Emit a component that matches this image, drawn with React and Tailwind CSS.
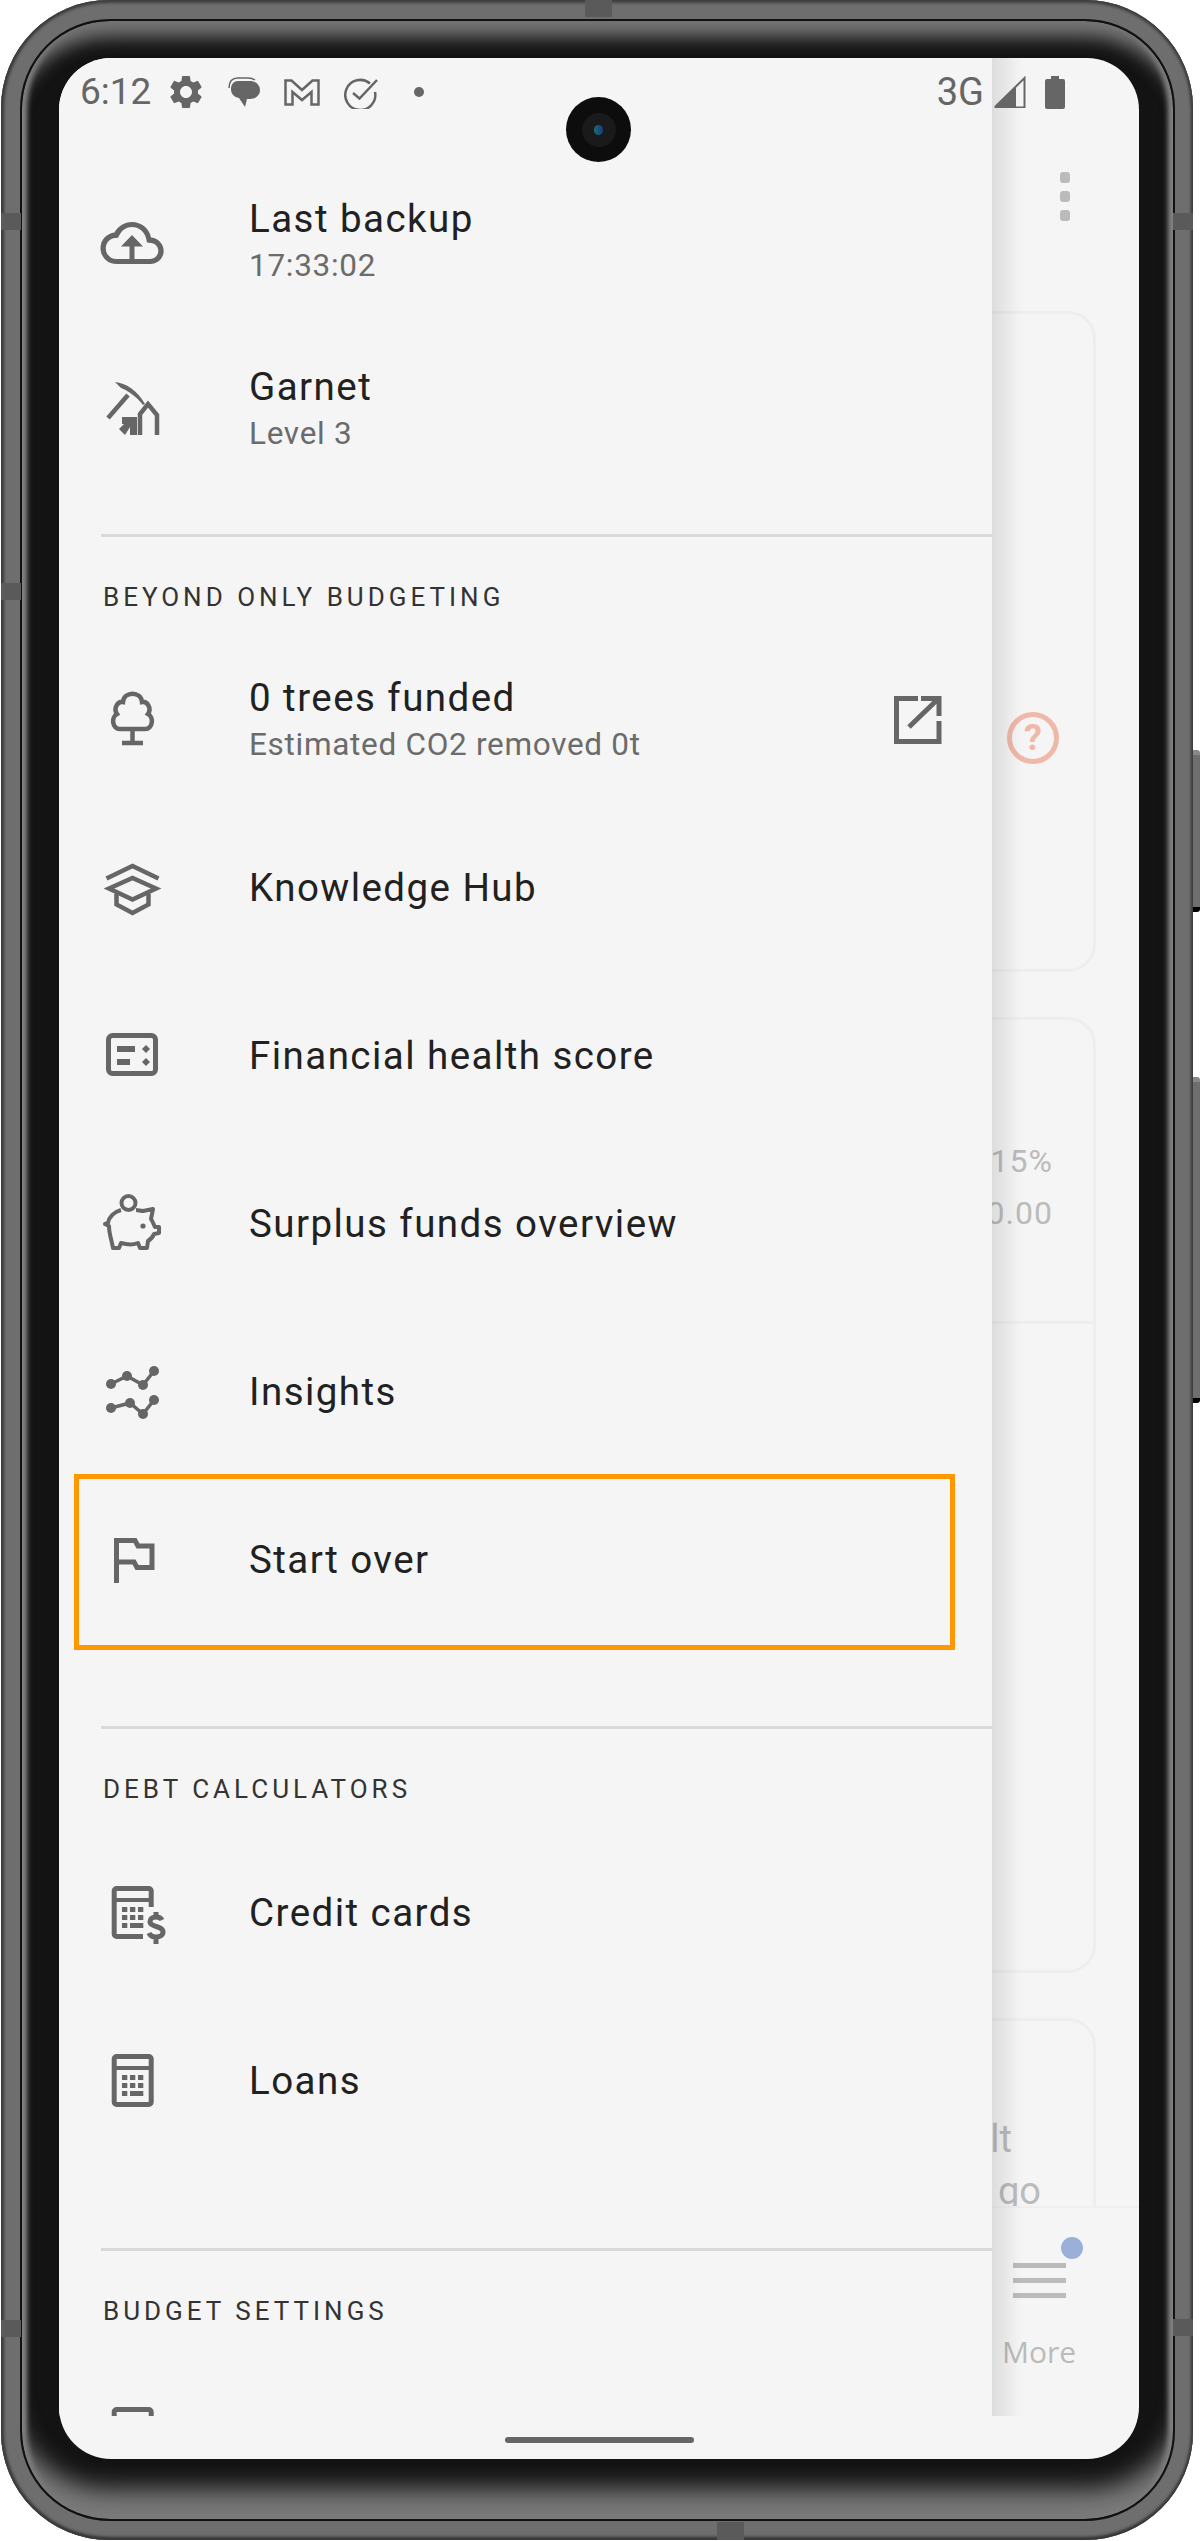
import React from 'react'
import { MdSettings } from 'react-icons/md'

const stroke = { fill: 'none', stroke: '#666666', strokeWidth: 4.5 }

function Icon({ children }) {
  return (
    <svg viewBox="0 0 64 64" className="h-16 w-16 overflow-visible">
      {children}
    </svg>
  )
}

function CloudIcon() {
  return (
    <Icon>
      <path
        d="M51 28.400C49.200 19.300 41.300 13 32 13c-7.600 0-14.200 4.300-17.500 10.600C6.600 24.400.5 31.100.5 39.200c0 8.700 7 15.800 15.800 15.800h34.200c7.200 0 13.200-5.900 13.200-13.100 0-6.900-5.400-12.600-12.200-13.500zM50.500 50H16.300C10.500 50 5.800 45.300 5.800 39.500c0-5.400 4-9.900 9.400-10.400l2.800-.3 1.300-2.500C21.900 21 26.700 18 32 18c6.900 0 12.800 4.900 14.200 11.700l.8 3.900 4 .3c4.100.3 7.300 3.700 7.300 7.800 0 4.300-3.500 8.300-7.800 8.300z"
        fill="#666666"
      />
      <path d="M21 37.500 32 26l11 11.500h-8.500V54h-5V37.500z" fill="#666666" />
    </Icon>
  )
}

function PickIcon() {
  return (
    <Icon>
      <path d="M8 41 28 18" {...stroke} />
      <path d="M15 5c11 1 22 8 30 22l-2 1C36 19 27 13 21 11z" fill="#666666" />
      <path d="M40 58V37l8-10 9 11v20" {...stroke} />
      <path d="M22 40h15v18h-7v-8l-5 8-6-6 5-5h-2z" fill="#666666" />
    </Icon>
  )
}

function TreeIcon() {
  return (
    <Icon>
      <path d="M20 41C12 41 11 29 17 26 13 20 18 13 23 14 24 3 41 3 42 14 47 13 52 20 48 26 54 29 53 41 45 41Z" {...stroke} />
      <path d="M32.500 41v13M22 55h21" {...stroke} />
    </Icon>
  )
}

function HubIcon() {
  return (
    <Icon>
      <path d="M6.500 22.500 32.500 10l26 12.500" {...stroke} />
      <path d="M9 32.500 32.500 22l23.500 10.500-23.500 11z" {...stroke} />
      <path d="M16.500 38v10.500l16 8.500 16-8.500V38" {...stroke} />
    </Icon>
  )
}

function HealthIcon() {
  return (
    <Icon>
      <rect x="8.500" y="11.500" width="47" height="38" rx="4" {...stroke} strokeWidth="5" />
      <path d="M17 22h18v6H17zM17 35h13v6H17z" fill="#666666" />
      <path d="m46 21 4 4-4 4-4-4zM46 34l4 4-4 4-4-4z" fill="#666666" />
    </Icon>
  )
}

function PiggyIcon() {
  return (
    <Icon>
      <circle cx="28.500" cy="11" r="7" {...stroke} strokeWidth="4" />
      <path
        d="M21 18C14 20 9 25 8 31L5 32 9 34C9 41 11 46 13 56H19L21 51C28 53 33 53 38 51L40 56H47L48 49C51 47 53 45 54 42L59 41V35L55 35C53 31 53 30 51 27L53 17 43 19C41 19 38 18 36 18"
        {...stroke}
        strokeWidth="4"
        strokeLinejoin="round"
      />
      <circle cx="43" cy="34" r="2.600" fill="#666666" />
    </Icon>
  )
}

function InsightsIcon() {
  const dots = [[11, 24], [27, 16], [43, 25], [54, 11], [11, 48], [30, 43], [43, 54], [54, 40]]
  return (
    <Icon>
      <path d="M11 24 27 16 43 25 54 11M11 48 30 43 43 54 54 40" {...stroke} strokeWidth="3.500" />
      {dots.map(([x, y]) => (
        <circle key={`${x}-${y}`} cx={x} cy={y} r="5" fill="#666666" />
      ))}
    </Icon>
  )
}

function FlagIcon() {
  return (
    <Icon>
      <path d="M16.500 55V12.500H35l3 5.500h14v21.500H37L34 34H16.500" {...stroke} strokeWidth="5" />
    </Icon>
  )
}

function CalcKeys() {
  return (
    <path
      d="M22 26h5.300v5H22zM30 26h5.300v5H30zM38 26h5.300v5H38zM22 34h5.300v5H22zM30 34h5.300v5H30zM38 34h5.300v5H38zM22 42h5.300v5H22zM30 42h13.300v5H30z"
      fill="#666666"
    />
  )
}

function CreditIcon() {
  return (
    <Icon>
      <path d="M51.200 26V10a2.500 2.500 0 0 0-2.500-2.500H16.700A2.500 2.500 0 0 0 14.200 10v43a2.500 2.500 0 0 0 2.500 2.500H43" {...stroke} strokeWidth="5" />
      <path d="M12 17h41v4H12z" fill="#666666" />
      <CalcKeys />
      <path d="M62 39c-1-2-3-3-6-3-3 0-6 1.500-6 4.500 0 6 13 4 13 10.500 0 3-3 5-7 5-3 0-6-1.500-7-4M56 31v5M56 56v7" {...stroke} strokeWidth="5" />
    </Icon>
  )
}

function LoansIcon() {
  return (
    <Icon>
      <rect x="14.200" y="7.500" width="37" height="48" rx="2.500" {...stroke} strokeWidth="5" />
      <path d="M12 17h41v4H12z" fill="#666666" />
      <CalcKeys />
    </Icon>
  )
}

function ExternalIcon() {
  return (
    <Icon>
      <path d="M32 10.500H10.500v43H53V33" {...stroke} strokeWidth="5" />
      <path d="M35 10.500h18V28M23 39 52 11" {...stroke} strokeWidth="5" />
    </Icon>
  )
}

function Row({ icon, title, sub, action, children }) {
  return (
    <div className="relative flex h-[168px] items-center pl-[41px]">
      <div className="w-[149px] shrink-0">{icon}</div>
      <div className={sub ? 'min-w-0 flex-1 pt-[2px]' : 'min-w-0 flex-1'}>
        <div className="text-[38.500px] leading-[46px] tracking-[1.450px] text-[#212121]">{title}</div>
        {sub && <div className="mt-[2px] text-[31.500px] leading-[44px] tracking-[0.700px] text-[#6b6b6b]">{sub}</div>}
      </div>
      {action && <div className="mr-[42px] shrink-0">{action}</div>}
      {children}
    </div>
  )
}

function Section({ label, className }) {
  return (
    <div className={className}>
      <div className="ml-[42px] h-[3px] bg-[#d9d9d9]" />
      <div className="ml-[44px] mt-[45px] text-[26px] leading-[30px] tracking-[4px] text-[#333333]">{label}</div>
    </div>
  )
}

function Drawer() {
  return (
    <div className="relative z-10 w-[933px] shrink-0 bg-[#f5f5f5] pt-[99px]">
      <div className="absolute bottom-0 left-full top-0 w-[30px] bg-gradient-to-r from-black/10 to-transparent" />
      <Row icon={<CloudIcon />} title="Last backup" sub="17:33:02" />
      <Row icon={<PickIcon />} title="Garnet" sub="Level 3" />
      <Section label="BEYOND ONLY BUDGETING" className="mt-[41px]" />
      <div className="mt-[24px]">
        <Row icon={<TreeIcon />} title="0 trees funded" sub="Estimated CO2 removed 0t" action={<ExternalIcon />} />
        <Row icon={<HubIcon />} title="Knowledge Hub" />
        <Row icon={<HealthIcon />} title="Financial health score" />
        <Row icon={<PiggyIcon />} title="Surplus funds overview" />
        <Row icon={<InsightsIcon />} title="Insights" />
        <Row icon={<FlagIcon />} title="Start over">
          <div className="absolute -top-[2px] left-[15px] h-[176px] w-[881px] border-[5px] border-[#ff9800]" />
        </Row>
      </div>
      <Section label="DEBT CALCULATORS" className="mt-[82px]" />
      <div className="mt-[25px]">
        <Row icon={<CreditIcon />} title="Credit cards" />
        <Row icon={<LoansIcon />} title="Loans" />
      </div>
      <Section label="BUDGET SETTINGS" className="mt-[83px]" />
      <div className="mt-[24px]">
        <Row icon={<LoansIcon />} title="" />
      </div>
    </div>
  )
}

function BehindDrawer() {
  return (
    <div className="flex min-w-0 flex-1 flex-col text-[#bbbbbb]">
      <div className="min-h-0 flex-1 overflow-hidden">
        <div className="ml-[68px] flex flex-col gap-[8px] pt-[114px]">
          <div className="h-[11px] w-[10px] rounded-[3px] bg-[#bbbbbb]" />
          <div className="h-[11px] w-[10px] rounded-[3px] bg-[#bbbbbb]" />
          <div className="h-[11px] w-[10px] rounded-[3px] bg-[#bbbbbb]" />
        </div>
        <div className="-ml-[40px] mr-[43px] mt-[90px] flex h-[661px] items-start justify-end rounded-[28px] border-[3px] border-[#eeeeee] pr-[34px] pt-[398px]">
          <div className="flex h-[52px] w-[52px] items-center justify-center rounded-full border-[5px] border-[#efb8a8] text-[36px] font-bold text-[#efb8a8]">?</div>
        </div>
        <div className="-ml-[40px] mr-[43px] mt-[45px] h-[956px] rounded-[28px] border-[3px] border-[#eeeeee]">
          <div className="flex h-[304px] flex-col items-end border-b-[3px] border-[#eeeeee] pr-[40px] pt-[115px] text-[32px] leading-[52px] tracking-[1px]">
            <div>15%</div>
            <div>0.00</div>
          </div>
        </div>
        <div className="-ml-[40px] mr-[43px] mt-[45px] h-[400px] rounded-[28px] border-[3px] border-[#eeeeee] pt-[92px] text-right text-[38px] leading-[52px]">
          <div className="pr-[81px]">lt</div>
          <div className="pr-[52px]">go</div>
        </div>
      </div>
      <div className="relative flex h-[210px] shrink-0 flex-col items-start border-t-2 border-[#efefef] pt-[55px]">
        <div className="absolute left-[69px] top-[29px] h-[22px] w-[22px] rounded-full bg-[#9ab0d8]" />
        <div className="ml-[21px] flex w-[53px] flex-col gap-[10px]">
          <div className="h-[5px] bg-[#bbbbbb]" />
          <div className="h-[5px] bg-[#bbbbbb]" />
          <div className="h-[5px] bg-[#bbbbbb]" />
        </div>
        <div className="ml-[10px] mt-[34px] font-['Open_Sans',sans-serif] text-[30px] leading-[40px]">More</div>
      </div>
    </div>
  )
}

function StatusBar() {
  return (
    <div className="absolute left-0 right-0 top-0 z-20 flex h-[66px] items-center justify-between pl-[21px] pr-[74px] pt-[2px]">
      <div className="flex items-center">
        <span className="text-[37px] leading-[40px] text-[#666666]">6:12</span>
        <MdSettings className="ml-[15px] h-[40px] w-[40px] text-[#666666]" />
        <svg viewBox="0 0 32 30" className="ml-[22px] h-[30px] w-[32px]">
          <path d="M1 11C1 4 5 1 10 1h10c3 0 5 .5 7 2" fill="none" stroke="#666666" strokeWidth="1.500" />
          <path d="M10 4h12c6 0 10 4 10 9s-4 9-10 9h-3l-2 8-6-9C6 20 3 17 3 12c0-5 3-8 7-8z" fill="#666666" />
        </svg>
        <svg viewBox="0 0 36 27" className="ml-[24px] h-[27px] w-[36px]">
          <path d="M1.500 1.500h6L18 11 28.500 1.500h6v24h-7V13L18 21l-9.500-8v12.500h-7z" fill="none" stroke="#666666" strokeWidth="2.500" />
        </svg>
        <svg viewBox="0 0 34 33" className="ml-[24px] h-[33px] w-[34px]">
          <path d="M26 7.500A15 15 0 1 0 31 16" fill="none" stroke="#666666" strokeWidth="2.500" />
          <path d="M9 17l6.500 5.500L33 4" fill="none" stroke="#666666" strokeWidth="2.500" />
        </svg>
        <div className="ml-[36px] h-[10px] w-[10px] rounded-full bg-[#666666]" />
      </div>
      <div className="flex items-center">
        <span className="text-[38px] leading-[40px] text-[#666666]">3G</span>
        <svg viewBox="0 0 32 32" className="ml-[10px] h-[32px] w-[32px]">
          <path d="M0 32 22 10v22z" fill="#666666" />
          <path d="M1 31 30.500 2v29.500H22" fill="none" stroke="#666666" strokeWidth="2" />
        </svg>
        <svg viewBox="0 0 20 33" className="ml-[19px] h-[33px] w-[20px]">
          <path d="M6 0h8v3h4a2 2 0 0 1 2 2v26a2 2 0 0 1-2 2H2a2 2 0 0 1-2-2V5a2 2 0 0 1 2-2h4z" fill="#666666" />
        </svg>
      </div>
    </div>
  )
}

function FrameMark({ className }) {
  return <div className={`absolute bg-[#5a5a5a] ${className}`} />
}

export default function App() {
  return (
    <div className="relative h-[2541px] w-[1200px] overflow-hidden bg-white font-['Roboto',sans-serif]">
      {/* side buttons */}
      <div className="absolute right-0 top-[750px] h-[162px] w-[9px] rounded-r-[3px] border-y-[5px] border-t-[#888888] border-b-black bg-[#6e6e6e]" />
      <div className="absolute right-0 top-[1077px] h-[326px] w-[9px] rounded-r-[3px] border-y-[5px] border-t-[#888888] border-b-black bg-[#6e6e6e]" />
      <div className="relative ml-[1px] h-[2540px] w-[1192px] rounded-[108px] bg-[#6e6e6e] p-[19px] pr-[18px] shadow-[inset_3px_0_3px_#3c3c3c,inset_-2px_0_3px_#3c3c3c,inset_0_3px_3px_#444444,inset_0_-3px_3px_#333333]">
        <FrameMark className="left-0 top-[213px] h-[17px] w-[20px]" />
        <FrameMark className="left-0 top-[583px] h-[17px] w-[20px]" />
        <FrameMark className="left-0 top-[2320px] h-[17px] w-[20px]" />
        <FrameMark className="right-0 top-[213px] h-[17px] w-[20px]" />
        <FrameMark className="right-0 top-[2319px] h-[17px] w-[20px]" />
        <FrameMark className="left-[584px] top-0 h-[17px] w-[27px]" />
        <FrameMark className="bottom-0 left-[716px] h-[18px] w-[27px]" />
        <div className="h-full rounded-[90px] border-2 border-[#111111] bg-[#131313] pb-[60px] pl-[37px] pr-[34px] pt-[37px] shadow-[inset_0_30px_18px_-14px_#777777,inset_0_-44px_24px_-14px_#7a7a7a,inset_11px_0_5px_-6px_#888888,inset_-11px_0_5px_-6px_#888888]">
          <div className="relative flex h-full flex-col overflow-hidden rounded-[52px] bg-[#f5f5f5]">
            <StatusBar />
            <div className="absolute left-[507px] top-[39px] z-20 flex h-[65px] w-[65px] items-center justify-center rounded-full bg-[#0d0d0d]">
              <div className="flex h-[34px] w-[34px] items-center justify-center rounded-full bg-[#1a1a1a]">
                <div className="h-[10px] w-[9px] rounded-full bg-gradient-to-r from-[#1f6a70] to-[#1a3a80]" />
              </div>
            </div>
            <div className="flex min-h-0 flex-1 overflow-hidden">
              <Drawer />
              <BehindDrawer />
            </div>
            <div className="flex h-[43px] shrink-0 justify-center pt-[21px]">
              <div className="h-[6px] w-[189px] rounded-full bg-[#666666]" />
            </div>
          </div>
        </div>
      </div>
    </div>
  )
}
